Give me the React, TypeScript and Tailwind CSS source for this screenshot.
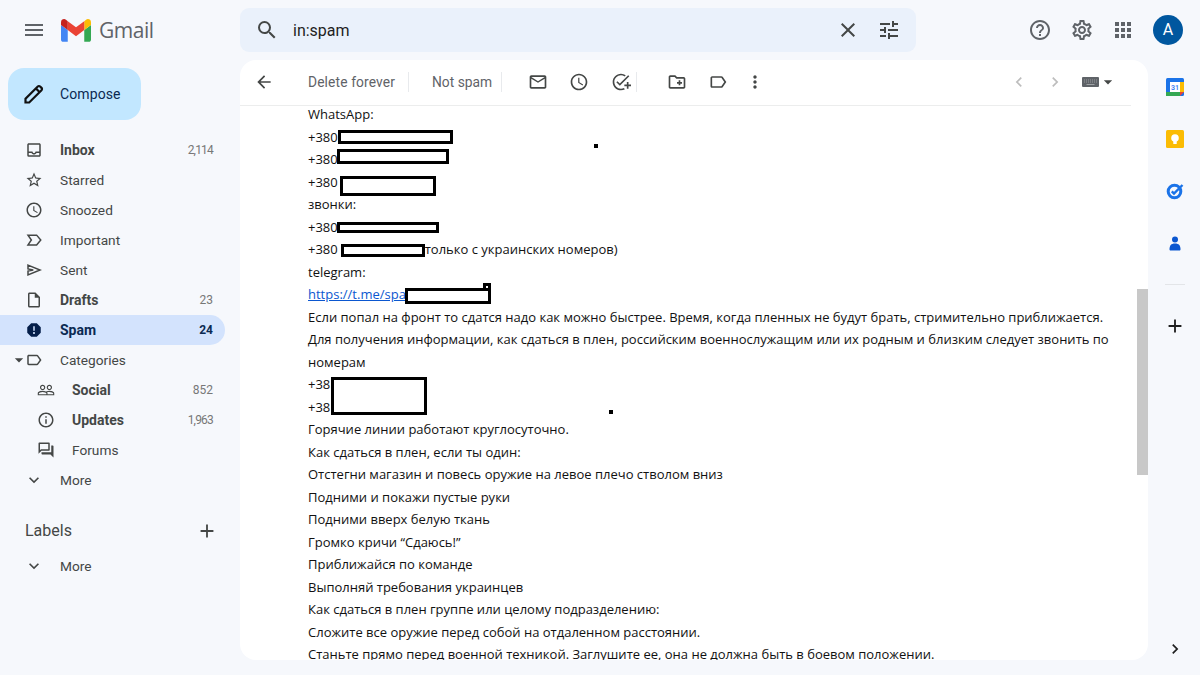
import React from 'react';
import {
  MdMenu, MdSearch, MdClose, MdTune, MdHelpOutline, MdOutlineSettings, MdApps, MdOutlineInbox,
  MdStarBorder, MdAccessTime, MdOutlineInsertDriveFile, MdReport, MdOutlineLabel,
  MdPeopleOutline, MdInfoOutline, MdOutlineForum, MdExpandMore, MdAdd, MdArrowBack, MdOutlineEmail,
  MdOutlineAddTask, MdOutlineCreateNewFolder, MdMoreVert, MdChevronLeft, MdChevronRight,
  MdArrowDropDown,
} from 'react-icons/md';

const SentIcon = ({ className }: { className?: string }) => (
  <svg viewBox="0 0 24 24" className={className} fill="none" stroke="currentColor" strokeWidth="2">
    <path d="M4 5.500 20 12 4 18.500v-5l7-1.500-7-1.500z" />
  </svg>
);

const ImportantIcon = ({ className }: { className?: string }) => (
  <svg viewBox="0 0 24 24" className={className} fill="none" stroke="currentColor" strokeWidth="2">
    <path d="M4 5.500h11.500L21 12l-5.500 6.500H4L8.500 12z" />
  </svg>
);

const PencilIcon = ({ className }: { className?: string }) => (
  <svg viewBox="0 0 24 24" className={className} fill="none" stroke="currentColor" strokeWidth="2.200">
    <path d="M3.500 20.500v-3.700L15.800 4.500a1.600 1.600 0 0 1 2.300 0l1.400 1.400a1.600 1.600 0 0 1 0 2.300L7.200 20.500z" />
    <path d="M14 6.500 17.500 10" />
  </svg>
);

const KeyboardIcon = () => (
  <svg viewBox="0 0 17 10" className="w-[17px] h-[10px]">
    <rect width="17" height="10" rx="1" fill="#5f6368" />
    <path d="M2 3h13M2 5h13" stroke="#a8abaf" strokeWidth="0.800" strokeDasharray="1 1" />
    <path d="M4.500 7.500h8" stroke="#a8abaf" strokeWidth="0.900" />
  </svg>
);

const GmailLogo = () => (
  <svg viewBox="0 0 32 24" className="w-[30px] h-[23px]">
    <path fill="#4285f4" d="M2.200 24h5V11.500L0 6v15.800C0 23 1 24 2.200 24z" />
    <path fill="#34a853" d="M24.800 24h5c1.200 0 2.200-1 2.200-2.200V6l-7.200 5.500z" />
    <path fill="#fbbc04" d="M24.800 2v9.500L32 6V3.200c0-2.800-3.100-4.300-5.300-2.700z" />
    <path fill="#ea4335" d="M7.200 11.500V2L16 8.600 24.800 2v9.500L16 18.100z" />
    <path fill="#c5221f" d="M0 3.200V6l7.200 5.500V2L5.300.5C3.100-1.100 0 .4 0 3.200z" />
  </svg>
);

const CalendarIcon = () => (
  <svg viewBox="0 0 18 18" className="w-[18px] h-[18px]">
    <rect width="18" height="18" rx="1.500" fill="#1a73e8" />
    <rect x="4" y="4" width="10" height="10" fill="#fff" />
    <rect x="14" y="4" width="4" height="10" fill="#fbbc04" />
    <rect y="14" width="14" height="4" fill="#34a853" />
    <path d="M14 14h4l-4 4z" fill="#ea4335" />
    <text x="9" y="12" textAnchor="middle" fontSize="7" fontWeight="700" fill="#4285f4" fontFamily="Roboto, sans-serif">31</text>
  </svg>
);

const KeepIcon = () => (
  <svg viewBox="0 0 18 18" className="w-[18px] h-[18px]">
    <rect width="18" height="18" rx="1.500" fill="#fbbc04" />
    <circle cx="9" cy="8" r="3.800" fill="#fff" />
    <rect x="7.300" y="11" width="3.400" height="3" fill="#fff" />
  </svg>
);

const TasksIcon = () => (
  <svg viewBox="0 0 18 18" className="w-[18px] h-[18px]" fill="none">
    <circle cx="8.500" cy="9.500" r="6.300" stroke="#1a73e8" strokeWidth="3" />
    <path d="M5.800 9.300 8 11.500 16.500 3" stroke="#1a73e8" strokeWidth="2.400" />
  </svg>
);

const ContactsIcon = () => (
  <svg viewBox="0 0 18 18" className="w-[18px] h-[18px]" fill="#0b57d0">
    <circle cx="9" cy="4.500" r="3" />
    <path d="M3.500 14.500c0-4 1.500-6 5.500-6s5.500 2 5.500 6c0 .5-.5 1-1 1h-9c-.5 0-1-.5-1-1z" />
  </svg>
);

const navItems = [
  { label: 'Inbox', count: '2,114', bold: true, icon: MdOutlineInbox },
  { label: 'Starred', icon: MdStarBorder },
  { label: 'Snoozed', icon: MdAccessTime },
  { label: 'Important', icon: ImportantIcon },
  { label: 'Sent', icon: SentIcon },
  { label: 'Drafts', count: '23', bold: true, icon: MdOutlineInsertDriveFile },
  { label: 'Spam', count: '24', bold: true, active: true, icon: MdReport },
];

const categoryItems = [
  { label: 'Social', count: '852', bold: true, icon: MdPeopleOutline },
  { label: 'Updates', count: '1,963', bold: true, icon: MdInfoOutline },
  { label: 'Forums', icon: MdOutlineForum },
];

const redactions = [
  'left-[98px] top-[25px] w-[115px] h-[14px]',
  'left-[97px] top-[44px] w-[112px] h-[15px]',
  'left-[100px] top-[71px] w-[96px] h-[20px]',
  'left-[97px] top-[117px] w-[102px] h-[11px]',
  'left-[101px] top-[139px] w-[84px] h-[13px]',
  'left-[165px] top-[183px] w-[86px] h-[16px]',
  'left-[243px] top-[178px] w-[8px] h-[8px]',
  'left-[91px] top-[272px] w-[96px] h-[38px]',
];

const ToolbarSep = () => <div className="w-px h-[20px] bg-[#e8eaed]" />;

const App = () => {
  return (
    <div className="w-[1200px] h-[675px] flex flex-col overflow-hidden bg-[#f6f8fc] font-['Roboto',sans-serif] text-[#444746]">
      {/* Top bar */}
      <header className="h-[60px] flex items-center shrink-0">
        <div className="w-[240px] flex items-center pl-[22px]">
          <MdMenu className="w-[24px] h-[24px] text-[#5f6368]" />
          <div className="ml-[15px] flex items-center">
            <GmailLogo />
          </div>
          <span className="ml-[8px] text-[21px] text-[#5f6368] font-['Open_Sans',sans-serif] leading-none tracking-[-0.5px]">Gmail</span>
        </div>
        <div className="w-[676px] h-[44px] rounded-[9px] bg-[#eaf1fb] flex items-center pl-[15px] pr-[15px]">
          <MdSearch className="w-[24px] h-[24px] text-[#444746]" />
          <span className="ml-[14px] pt-[1px] text-[16px] text-[#1f1f1f] flex-1">in:spam</span>
          <MdClose className="w-[24px] h-[24px] text-[#444746]" />
          <MdTune className="ml-[17px] w-[24px] h-[24px] text-[#444746]" />
        </div>
        <div className="flex-1 flex items-center pl-[112px]">
          <MdHelpOutline className="w-[24px] h-[24px] text-[#5f6368]" />
          <MdOutlineSettings className="ml-[18px] w-[24px] h-[24px] text-[#5f6368]" />
          <MdApps className="ml-[17px] w-[24px] h-[24px] text-[#5f6368]" />
          <div className="ml-[18px] w-[30px] h-[30px] rounded-full bg-[#00579f] text-white flex items-center justify-center text-[16px]">A</div>
        </div>
      </header>

      <div className="flex flex-1 min-h-0 pb-[15px]">
        {/* Sidebar */}
        <aside className="w-[240px] shrink-0 flex flex-col text-[13.700px]">
          <div className="ml-[8px] mt-[8px] w-[133px] h-[52px] rounded-[16px] bg-[#c2e7ff] flex items-center pl-[14px] text-[#0b2a52]">
            <PencilIcon className="w-[24px] h-[24px] text-[#111]" />
            <span className="ml-[14px] text-[14px] tracking-[0.1px]">Compose</span>
          </div>
          <nav className="mt-[15px] flex flex-col">
            {navItems.map((item) => (
              <div
                key={item.label}
                className={`w-[225px] h-[30px] flex items-center pl-[25px] pr-[12px] rounded-r-full ${item.active ? 'bg-[#d3e3fd] text-[#0b2a52]' : ''}`}
              >
                <item.icon className={`w-[18px] h-[18px] shrink-0 ${item.active ? 'text-[#041e49]' : 'text-[#444746]'}`} />
                <span className={`ml-[17px] flex-1 ${item.bold ? 'font-bold text-[14px]' : ''}`}>{item.label}</span>
                {item.count && (
                  <span className={`text-[12px] ${item.active ? 'font-bold' : 'text-[#777]'} ${item.count.includes(',') ? 'tracking-[-0.8px]' : ''}`}>{item.count}</span>
                )}
              </div>
            ))}
            <div className="w-[225px] h-[30px] flex items-center pl-[9px]">
              <MdArrowDropDown className="w-[20px] h-[20px] text-[#444746]" />
              <MdOutlineLabel className="w-[18px] h-[18px] -ml-[4px] text-[#444746]" />
              <span className="ml-[17px]">Categories</span>
            </div>
            {categoryItems.map((item) => (
              <div key={item.label} className="w-[225px] h-[30px] flex items-center pl-[37px] pr-[12px]">
                <item.icon className="w-[18px] h-[18px] shrink-0 text-[#444746]" />
                <span className={`ml-[17px] flex-1 ${item.bold ? 'font-bold text-[14px]' : ''}`}>{item.label}</span>
                {item.count && <span className={`text-[12px] text-[#777] ${item.count.includes(',') ? 'tracking-[-0.8px]' : ''}`}>{item.count}</span>}
              </div>
            ))}
            <div className="h-[30px] flex items-center pl-[24px]">
              <MdExpandMore className="w-[20px] h-[20px] text-[#444746]" />
              <span className="ml-[16px]">More</span>
            </div>
          </nav>
          <div className="mt-[21px] h-[30px] w-[225px] flex items-center justify-between pl-[25px] pr-[7px]">
            <span className="text-[16px]">Labels</span>
            <MdAdd className="w-[22px] h-[22px] text-[#444746]" />
          </div>
          <div className="mt-[5px] h-[30px] flex items-center pl-[24px]">
            <MdExpandMore className="w-[20px] h-[20px] text-[#444746]" />
            <span className="ml-[16px]">More</span>
          </div>
        </aside>

        {/* Message pane */}
        <main className="w-[908px] shrink-0 bg-white rounded-[16px] overflow-hidden flex">
          <div className="flex-1 min-w-0 flex flex-col">
            <div className="h-[46px] shrink-0 mr-[6px] flex items-center pl-[14px] pb-[1px] border-b border-[#eceded] text-[13.800px] text-[#5f6368]">
              <MdArrowBack className="w-[20px] h-[20px] text-[#444746]" />
              <span className="ml-[34px] tracking-[0.12px]">Delete forever</span>
              <div className="ml-[13px]"><ToolbarSep /></div>
              <span className="ml-[23px]">Not spam</span>
              <div className="ml-[9px]"><ToolbarSep /></div>
              <MdOutlineEmail className="ml-[26px] w-[20px] h-[20px] text-[#444746]" />
              <MdAccessTime className="ml-[21px] w-[20px] h-[20px] text-[#444746]" />
              <MdOutlineAddTask className="ml-[22px] w-[20px] h-[20px] text-[#444746]" />
              <div className="ml-[5px]"><ToolbarSep /></div>
              <MdOutlineCreateNewFolder className="ml-[30px] w-[20px] h-[20px] text-[#444746]" />
              <MdOutlineLabel className="ml-[21px] w-[20px] h-[20px] text-[#444746]" />
              <MdMoreVert className="ml-[17px] w-[20px] h-[20px] text-[#444746]" />
              <MdChevronLeft className="ml-auto w-[20px] h-[20px] text-[#bdbdbd]" />
              <MdChevronRight className="ml-[16px] w-[20px] h-[20px] text-[#bdbdbd]" />
              <div className="ml-[17px]"><KeyboardIcon /></div>
              <MdArrowDropDown className="-ml-[1px] mr-[13px] w-[20px] h-[20px] text-[#444746]" />
            </div>

            <div className="relative flex-1 min-h-0 overflow-hidden pl-[68px] -mt-px text-[13px] leading-[22.500px] text-[#111] font-['Open_Sans',sans-serif] whitespace-nowrap">
              <div className="-mt-[1.750px]">
                <p>WhatsApp:</p>
                <p>+380</p>
                <p>+380</p>
                <p>+380</p>
                <p>звонки:</p>
                <p>+380</p>
                <p>+380<span className="ml-[87px]">только с украинских номеров)</span></p>
                <p>telegram:</p>
                <p><span className="text-[#0b57d0] underline">https://t.me/spa</span></p>
                <p>Если попал на фронт то сдатся надо как можно быстрее. Время, когда пленных не будут брать, стримительно приближается.</p>
                <p>Для получения информации, как сдаться в плен, российским военнослужащим или их родным и близким следует звонить по</p>
                <p>номерам</p>
                <p>+38</p>
                <p>+38</p>
                <p>Горячие линии работают круглосуточно.</p>
                <p>Как сдаться в плен, если ты один:</p>
                <p>Отстегни магазин и повесь оружие на левое плечо стволом вниз</p>
                <p>Подними и покажи пустые руки</p>
                <p>Подними вверх белую ткань</p>
                <p>Громко кричи “Сдаюсь!”</p>
                <p>Приближайся по команде</p>
                <p>Выполняй требования украинцев</p>
                <p>Как сдаться в плен группе или целому подразделению:</p>
                <p>Сложите все оружие перед собой на отдаленном расстоянии.</p>
                <p>Станьте прямо перед военной техникой. Заглушите ее, она не должна быть в боевом положении.</p>
              </div>
              {/* redaction marks drawn over the text */}
              {redactions.map((pos) => (
                <div key={pos} className={`absolute ${pos} border-[3px] border-black bg-white`} />
              ))}
              <div className="absolute left-[354px] top-[39px] w-[4px] h-[4px] bg-black" />
              <div className="absolute left-[369px] top-[305px] w-[4px] h-[4px] bg-black" />
            </div>
          </div>
          <div className="w-[11px] shrink-0 pt-[229px]">
            <div className="h-[186px] bg-[#c8c8c8]" />
          </div>
        </main>

        {/* Right rail */}
        <aside className="w-[52px] shrink-0 flex flex-col items-center pl-[1px]">
          <div className="mt-[18px]"><CalendarIcon /></div>
          <div className="mt-[34px]"><KeepIcon /></div>
          <div className="mt-[34px]"><TasksIcon /></div>
          <div className="mt-[35px]"><ContactsIcon /></div>
          <div className="mt-[31px] w-[20px] h-px bg-[#e3e5e8]" />
          <MdAdd className="mt-[30px] w-[22px] h-[22px] text-[#1f1f1f]" />
          <MdChevronRight className="mt-auto mb-[1px] w-[20px] h-[20px] text-[#1f1f1f]" />
        </aside>
      </div>
    </div>
  );
};

export default App;
